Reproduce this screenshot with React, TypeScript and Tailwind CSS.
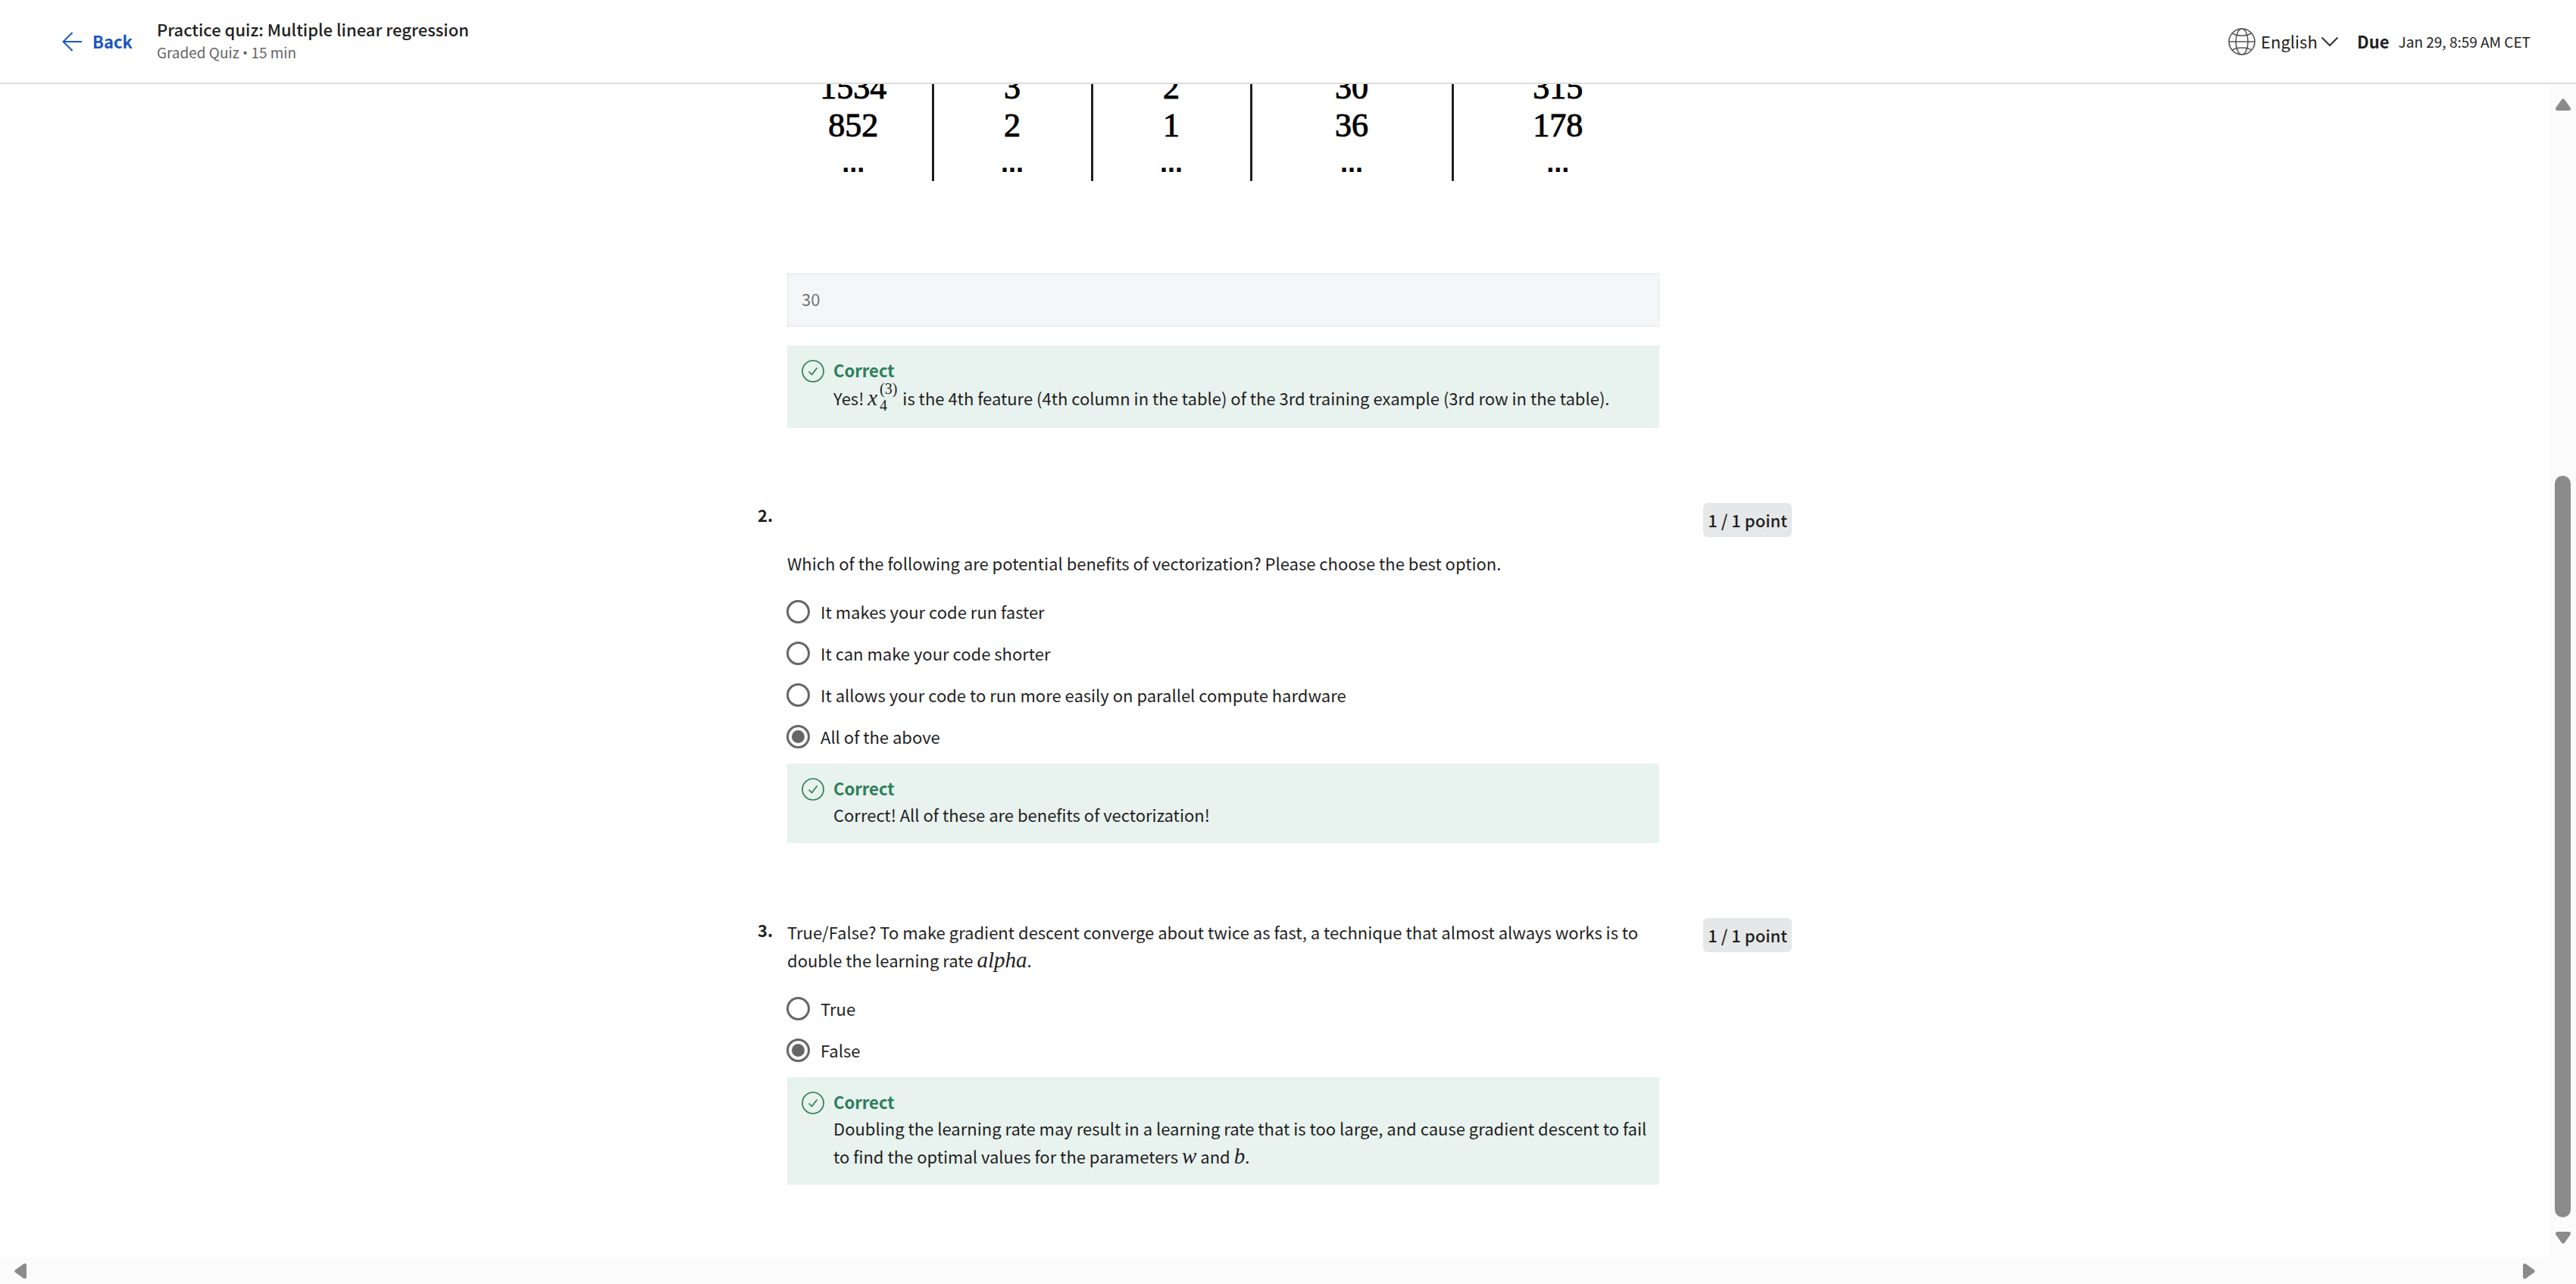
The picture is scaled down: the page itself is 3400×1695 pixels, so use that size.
import type { ReactNode } from "react";

const table = [
  ["1534", "3", "2", "30", "315"],
  ["852", "2", "1", "36", "178"],
  ["...", "...", "...", "...", "..."],
];

const columnClasses = [
  "w-[192px] pr-4 border-r-3",
  "w-[210px] border-r-3",
  "w-[210px] border-r-3",
  "w-[266px] border-r-3",
  "pl-1",
];

function ArrowLeft() {
  return (
    <svg className="h-[26px] w-[26px]" viewBox="0 0 26 26" fill="none" stroke="currentColor" strokeWidth="2" aria-hidden="true">
      <path d="M26 13H1.5M13.5 1 1.5 13l12 12" />
    </svg>
  );
}

function Globe() {
  return (
    <svg className="size-9" viewBox="0 0 36 36" fill="none" stroke="#555" strokeWidth="1.6" aria-hidden="true">
      <circle cx="18" cy="18" r="17" />
      <ellipse cx="18" cy="18" rx="8" ry="17" />
      <path d="M1 18h34M5.500 7c3 2 8 3 12.500 3s9.500-1 12.500-3M5.500 29c3-2 8-3 12.500-3s9.500 1 12.500 3" />
    </svg>
  );
}

function ChevronDown() {
  return (
    <svg className="pointer-events-none col-start-1 row-start-1 h-[14px] w-6 self-center justify-self-end" viewBox="0 0 24 14" fill="none" stroke="#333" strokeWidth="2" aria-hidden="true">
      <path d="m1.500 1.500 10.500 10.500 10.500-10.500" />
    </svg>
  );
}

function CheckCircle() {
  return (
    <svg className="mt-1 size-[30px] shrink-0 text-[#2d7f5a]" viewBox="0 0 30 30" fill="none" stroke="currentColor" strokeWidth="1.7" aria-hidden="true">
      <circle cx="15" cy="15" r="14" />
      <path d="m9.500 15.500 4 4L20.500 10.500" />
    </svg>
  );
}

function Triangle({ className }: { className: string }) {
  return (
    <svg className={className} viewBox="0 0 22 16" fill="#8b8b8b" stroke="#8b8b8b" strokeWidth="5" strokeLinejoin="round" aria-hidden="true">
      <path d="M11 3 18.500 13.500h-15z" />
    </svg>
  );
}

function Variable({ children }: { children: ReactNode }) {
  return <i className="font-['Liberation_Serif',serif] text-[29px]">{children}</i>;
}

function Feedback({ children }: { children: ReactNode }) {
  return (
    <div className="flex gap-3 bg-[#e8f2ee] pt-[15px] pr-2 pb-[19px] pl-[19px]">
      <CheckCircle />
      <div>
        <h3 className="leading-[34px] font-bold text-[#2d7f5a]">Correct</h3>
        <p>{children}</p>
      </div>
    </div>
  );
}

function Question({ number, name, prompt, options, selected, feedback }: {
  number: number;
  name: string;
  prompt: ReactNode;
  options: string[];
  selected: string;
  feedback: ReactNode;
}) {
  return (
    <section className="mt-[96px] flex items-start">
      <span className="w-[39px] shrink-0 font-bold">{number}.</span>
      <div className="min-w-0 flex-1 pt-[3px]">
        <fieldset>
          <legend className="mb-[18px]">{prompt}</legend>
          {options.map((option) => (
            <label key={option} className="flex h-[55px] items-center gap-[14px]">
              <input
                type="radio"
                name={name}
                defaultChecked={option === selected}
                className="-ml-px grid size-[31px] shrink-0 appearance-none place-content-center rounded-full border-3 border-[#666] before:size-[17px] before:rounded-full checked:before:bg-[#666]"
              />
              {option}
            </label>
          ))}
        </fieldset>
        <div className="mt-2">
          <Feedback>{feedback}</Feedback>
        </div>
      </div>
      <div className="flex w-[175px] shrink-0 justify-end pt-[3px]">
        <span className="rounded-md bg-[#e5e7e8] px-[6px] py-1 font-medium">1 / 1 point</span>
      </div>
    </section>
  );
}

export default function App() {
  return (
    <div className="flex h-screen flex-col overflow-hidden bg-white font-['Noto_Sans_CJK_SC',sans-serif] text-[22px] leading-[37px] text-[#1f1f1f]">
      <header className="flex h-[111px] shrink-0 items-center border-b-2 border-[#dcdcdc] pr-[60px] pl-[82px]">
        <a href="#back" className="flex items-center gap-[14px] font-bold text-[#1a56c0]">
          <ArrowLeft />
          Back
        </a>
        <div className="ml-8 pb-[2px]">
          <h1 className="leading-[32px] font-medium">Practice quiz: Multiple linear regression</h1>
          <p className="text-[19px] leading-[30px] text-[#666]">
            Graded Quiz <span className="font-['Open_Sans',sans-serif]">•</span> 15 min
          </p>
        </div>
        <div className="ml-auto flex items-center">
          <Globe />
          <label className="ml-[7px] grid">
            <select aria-label="Language" className="col-start-1 row-start-1 w-[103px] appearance-none" defaultValue="English">
              <option>English</option>
            </select>
            <ChevronDown />
          </label>
          <span className="ml-6 font-bold">Due</span>
          <time className="ml-3 text-[19px]">Jan 29, 8:59 AM CET</time>
        </div>
      </header>

      <div className="flex min-h-0 flex-1">
        <div className="flex min-w-0 flex-1 flex-col">
          <main className="min-h-0 flex-1 overflow-hidden">
            <div className="mx-auto max-w-[1365px]">
              <section className="mr-[175px] ml-[39px]">
                <table className="-mt-[20px] w-full table-fixed border-collapse text-center font-['Liberation_Serif',serif] text-[44px] text-black">
                  <tbody>
                    {table.map((row, r) => (
                      <tr key={r} className={r === 2 ? "font-['Liberation_Sans',sans-serif] text-[36px] leading-[48px] font-bold" : "leading-[50px] [-webkit-text-stroke:1px_black]"}>
                        {row.map((cell, c) => (
                          <td key={c} className={`border-[#1f1f1f] ${columnClasses[c]}`}>{cell}</td>
                        ))}
                      </tr>
                    ))}
                  </tbody>
                </table>
                <input
                  type="text"
                  aria-label="Answer"
                  readOnly
                  defaultValue="30"
                  className="mt-[122px] block h-[70px] w-full border border-[#e3e5e7] bg-[#f5f6f8] px-[18px] pb-1 text-[#757575]"
                />
                <div className="mt-[25px]">
                  <Feedback>
                    Yes!{" "}
                    <Variable>x</Variable>
                    <span className="-mt-[3px] mr-[2px] ml-[3px] inline-flex flex-col align-[15px] font-['Liberation_Serif',serif] text-[20px] leading-[22px]">
                      <span>(3)</span>
                      <span>4</span>
                    </span>{" "}
                    is the 4th feature (4th column in the table) of the 3rd training example (3rd row in the table).
                  </Feedback>
                </div>
              </section>

              <Question
                number={2}
                name="vectorization"
                prompt={<span className="block pt-[61px]">Which of the following are potential benefits of vectorization? Please choose the best option.</span>}
                options={[
                  "It makes your code run faster",
                  "It can make your code shorter",
                  "It allows your code to run more easily on parallel compute hardware",
                  "All of the above",
                ]}
                selected="All of the above"
                feedback="Correct! All of these are benefits of vectorization!"
              />
              <Question
                number={3}
                name="learning-rate"
                prompt={<>True/False? To make gradient descent converge about twice as fast, a technique that almost always works is to double the learning rate <Variable>alpha</Variable>.</>}
                options={["True", "False"]}
                selected="False"
                feedback={<>Doubling the learning rate may result in a learning rate that is too large, and cause gradient descent to fail to find the optimal values for the parameters <Variable>w</Variable> and <Variable>b</Variable>.</>}
              />
            </div>
          </main>
          <div className="flex h-[35px] shrink-0 items-center justify-between bg-[#fbfbfb] px-4">
            <Triangle className="h-4 w-[22px] -rotate-90" />
            <Triangle className="h-4 w-[22px] rotate-90" />
          </div>
        </div>
        <div className="flex w-[35px] shrink-0 flex-col items-center bg-[#fbfbfb] pt-[19px] pb-[53px]">
          <Triangle className="h-4 w-[22px] shrink-0" />
          <div className="mt-[18px] flex min-h-0 w-[21px] flex-1 flex-col">
            <div className="flex-[464]" />
            <div className="flex-[979] rounded-full bg-[#8b8b8b]" />
          </div>
          <Triangle className="mt-[19px] h-4 w-[22px] shrink-0 rotate-180" />
        </div>
      </div>
    </div>
  );
}
